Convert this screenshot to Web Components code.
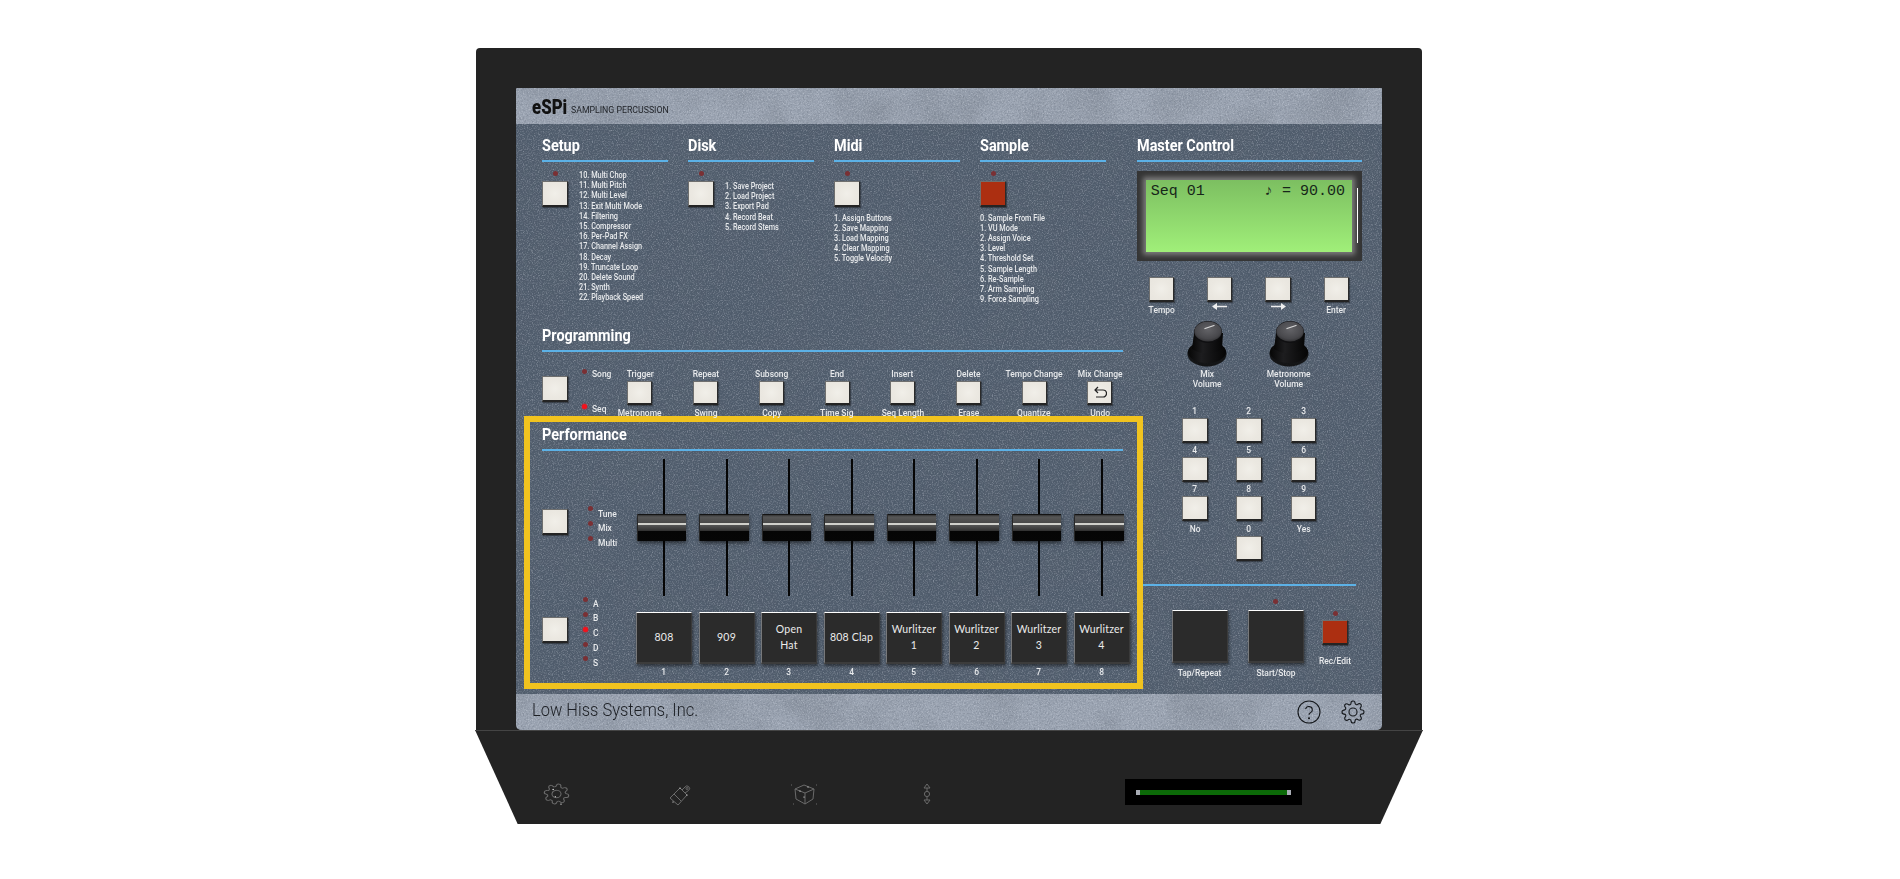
<!DOCTYPE html>
<html>

<head>
    <meta charset="utf8" />
    <style>
        body {
            margin: 0;
            background: #fff;
            font-family: Roboto, "Liberation Sans", sans-serif;
            overflow: hidden;
        }
    </style>
</head>

<body>
    <sp-case>
        <sp-panel>
            <sp-column slot="left">
                <sp-top>
                    <sp-section title="Setup">
                        <sp-row>
                            <sp-ledbutton></sp-ledbutton>
                            <sp-list style="--gap:11px">
                                <div>10. Multi Chop</div><div>11. Multi Pitch</div><div>12. Multi Level</div>
                                <div>13. Exit Multi Mode</div><div>14. Filtering</div><div>15. Compressor</div>
                                <div>16. Per-Pad FX</div><div>17. Channel Assign</div><div>18. Decay</div>
                                <div>19. Truncate Loop</div><div>20. Delete Sound</div><div>21. Synth</div>
                                <div>22. Playback Speed</div>
                            </sp-list>
                        </sp-row>
                    </sp-section>
                    <sp-section title="Disk">
                        <sp-row>
                            <sp-ledbutton></sp-ledbutton>
                            <sp-list style="--gap:11px;--top:19px">
                                <div>1. Save Project</div><div>2. Load Project</div><div>3. Export Pad</div>
                                <div>4. Record Beat</div><div>5. Record Stems</div>
                            </sp-list>
                        </sp-row>
                    </sp-section>
                    <sp-section title="Midi">
                        <sp-ledbutton></sp-ledbutton>
                        <sp-list style="--top:6px">
                            <div>1. Assign Buttons</div><div>2. Save Mapping</div><div>3. Load Mapping</div>
                            <div>4. Clear Mapping</div><div>5. Toggle Velocity</div>
                        </sp-list>
                    </sp-section>
                    <sp-section title="Sample">
                        <sp-ledbutton red></sp-ledbutton>
                        <sp-list style="--top:6px">
                            <div>0. Sample From File</div><div>1. VU Mode</div><div>2. Assign Voice</div>
                            <div>3. Level</div><div>4. Threshold Set</div><div>5. Sample Length</div>
                            <div>6. Re-Sample</div><div>7. Arm Sampling</div><div>9. Force Sampling</div>
                        </sp-list>
                    </sp-section>
                </sp-top>
                <sp-programming>
                    <sp-cell top="Trigger" bottom="Metronome"></sp-cell>
                    <sp-cell top="Repeat" bottom="Swing"></sp-cell>
                    <sp-cell top="Subsong" bottom="Copy"></sp-cell>
                    <sp-cell top="End" bottom="Time Sig"></sp-cell>
                    <sp-cell top="Insert" bottom="Seq Length"></sp-cell>
                    <sp-cell top="Delete" bottom="Erase"></sp-cell>
                    <sp-cell top="Tempo Change" bottom="Quantize"></sp-cell>
                    <sp-cell top="Mix Change" bottom="Undo" undo></sp-cell>
                </sp-programming>
                <sp-performance>
                    <sp-fader></sp-fader><sp-fader></sp-fader><sp-fader></sp-fader><sp-fader></sp-fader>
                    <sp-fader></sp-fader><sp-fader></sp-fader><sp-fader></sp-fader><sp-fader></sp-fader>
                    <sp-pad slot="pads" num="1">808</sp-pad>
                    <sp-pad slot="pads" num="2">909</sp-pad>
                    <sp-pad slot="pads" num="3">Open<br>Hat</sp-pad>
                    <sp-pad slot="pads" num="4">808 Clap</sp-pad>
                    <sp-pad slot="pads" num="5">Wurlitzer<br>1</sp-pad>
                    <sp-pad slot="pads" num="6">Wurlitzer<br>2</sp-pad>
                    <sp-pad slot="pads" num="7">Wurlitzer<br>3</sp-pad>
                    <sp-pad slot="pads" num="8">Wurlitzer<br>4</sp-pad>
                </sp-performance>
            </sp-column>
            <sp-master slot="right"></sp-master>
        </sp-panel>
    </sp-case>
    <script>
        const GEAR = 'M19.4 15a1.65 1.65 0 0 0 .33 1.82l.06.06a2 2 0 0 1 0 2.83 2 2 0 0 1-2.83 0l-.06-.06a1.65 1.65 0 0 0-1.82-.33 1.65 1.65 0 0 0-1 1.51V21a2 2 0 0 1-2 2 2 2 0 0 1-2-2v-.09A1.65 1.65 0 0 0 9 19.4a1.65 1.65 0 0 0-1.82.33l-.06.06a2 2 0 0 1-2.83 0 2 2 0 0 1 0-2.83l.06-.06a1.65 1.65 0 0 0 .33-1.82 1.65 1.65 0 0 0-1.51-1H3a2 2 0 0 1-2-2 2 2 0 0 1 2-2h.09A1.65 1.65 0 0 0 4.6 9a1.65 1.65 0 0 0-.33-1.82l-.06-.06a2 2 0 0 1 0-2.83 2 2 0 0 1 2.83 0l.06.06a1.65 1.65 0 0 0 1.82.33H9a1.65 1.65 0 0 0 1-1.51V3a2 2 0 0 1 2-2 2 2 0 0 1 2 2v.09a1.65 1.65 0 0 0 1 1.51 1.65 1.65 0 0 0 1.82-.33l.06-.06a2 2 0 0 1 2.83 0 2 2 0 0 1 0 2.83l-.06.06a1.65 1.65 0 0 0-.33 1.82V9a1.65 1.65 0 0 0 1.51 1H21a2 2 0 0 1 2 2 2 2 0 0 1-2 2h-.09a1.65 1.65 0 0 0-1.51 1z'

        // small printed label, squeezed because the panel font is a condensed one
        const LABEL = `.lb{font-size:9.5px;line-height:10px;color:#e8eaec;white-space:nowrap;transform:scaleX(.89);font-weight:500}`

        // every element is only markup + styles in an open shadow root
        function make(name, css, html) {
            customElements.define(name, class extends HTMLElement {
                connectedCallback() {
                    if (this.shadowRoot) return
                    const attrs = {}
                    for (const a of this.attributes) attrs[a.name] = a.value
                    const shadow = this.attachShadow({ mode: 'open' })
                    shadow.innerHTML = `<style>${LABEL}${css}</style>` + (typeof html === 'function' ? html(attrs, this) : html)
                }
            })
        }

        make('sp-led', `
            :host{display:block;width:5px;height:5px;border-radius:50%;background:#7a3034;flex:none}
            :host([on]){background:#f3121c;box-shadow:0 0 2px #f3121c}
        `, '')

        make('sp-button', `
            :host{display:block;box-sizing:border-box;flex:none;width:var(--w,26px);height:var(--h,26px);
                background:radial-gradient(circle at 50% 50%,#f1efe9 0,#ebe8e1 55%,#e8e5de 100%);
                border:1.5px solid #6f6f6e;border-right-color:#2b2b2b;border-bottom:2px solid #242424;
                box-shadow:1px 1px 1px rgba(0,0,0,.35);display:flex;align-items:center;justify-content:center}
            :host([red]){background:#ac2f11}
            svg{width:14px;height:13px;fill:none;stroke:#222;stroke-width:1.2}
        `, a => 'undo' in a ? `<svg viewBox="0 0 14 13"><path d="M5 1 2 4l3 3M2 4h8a3.5 3.5 0 0 1 0 7H3"/></svg>` : '')

        make('sp-ledbutton', `
            :host{display:flex;flex-direction:column;align-items:center;width:26px;padding-top:8.5px;flex:none}
            sp-button{margin-top:5px}
        `, a => `<sp-led></sp-led><sp-button ${'red' in a ? 'red' : ''}></sp-button>`)

        make('sp-head', `
            :host{display:block;box-sizing:border-box;height:27px;border-bottom:2.6px solid #5cb1e6;flex:none}
            div{font-size:16.5px;line-height:22px;font-weight:700;color:#fff;transform:scaleX(.875);transform-origin:0 50%;white-space:nowrap}
        `, `<div><slot></slot></div>`)

        make('sp-section', `
            :host{display:block;width:126px;flex:none}
        `, a => `<sp-head>${a.title}</sp-head><slot></slot>`)

        make('sp-row', `:host{display:flex}`, `<slot></slot>`)

        make('sp-list', `
            :host{display:block;font-size:9.5px;line-height:10.2px;font-weight:500;color:#e8eaec;white-space:nowrap;
                margin-left:var(--gap,0);margin-top:var(--top,8px);transform:scaleX(.77);transform-origin:0 0}
        `, `<slot></slot>`)

        make('sp-top', `:host{display:flex;gap:20px;height:190px;margin-left:26px}`, `<slot></slot>`)

        make('sp-mode', `
            :host{display:flex;gap:5px;height:10px;align-items:flex-start}
            sp-led{margin-top:var(--mt,0)}
            .lb{transform-origin:0 50%}
        `, a => `<sp-led ${'on' in a ? 'on' : ''}></sp-led><div class="lb">${a.text}</div>`)

        make('sp-cell', `
            :host{display:flex;flex-direction:column;align-items:center;width:65.7px;flex:none}
            sp-button{--w:25px;--h:24px;margin:2px 0 3.3px}
        `, a => `<div class="lb">${a.top}</div><sp-button ${'undo' in a ? 'undo' : ''}></sp-button><div class="lb">${a.bottom}</div>`)

        make('sp-programming', `
            :host{display:block;height:91px;margin-left:26px;width:581px}
            .row{display:flex;margin-top:16.7px;width:640px}
            sp-button{margin-top:7px}
            .modes{width:39.15px;flex:none;box-sizing:border-box;padding-left:13.5px;display:flex;flex-direction:column;gap:25.3px;--mt:.5px}
        `, `<sp-head>Programming</sp-head>
            <div class="row">
                <sp-button></sp-button>
                <div class="modes"><sp-mode text="Song"></sp-mode><sp-mode text="Seq" on></sp-mode></div>
                <slot></slot>
            </div>`)

        make('sp-fader', `
            :host{display:flex;justify-content:center;width:62.5px;height:137px;position:relative}
            .track{width:2.2px;height:100%;background:#050505;margin-left:.6px}
            .thumb{position:absolute;left:5.2px;top:55px;width:48.5px;height:27px;box-sizing:border-box;
                border-top:1.5px solid #141414;
                background:linear-gradient(#333 0,#565656 2px,#474747 8px,#cfcfca 8.4px,#cfcfca 10px,#525252 10.4px,#303030 16px,#050505 16.4px,#060606 100%);
                box-shadow:0 2px 4px rgba(0,0,0,.55),-1px 0 0 #333}
        `, `<div class="track"></div><div class="thumb"></div>`)

        make('sp-pad', `
            :host{display:flex;flex-direction:column;align-items:center;width:62.5px}
            .pad{box-sizing:border-box;width:var(--w,56px);height:var(--h,52px);background:#2b2b2b;
                border-top:1.2px solid #fff;border-left:1.5px solid #77787a;border-right:1.5px solid #3a3a3a;border-bottom:2px solid #3c3c3c;
                box-shadow:1px 2px 3px rgba(0,0,0,.5);
                display:flex;align-items:center;justify-content:center;text-align:center;
                font-family:Lato,sans-serif;font-weight:400;font-size:10.5px;line-height:16.5px;color:#ececec;letter-spacing:.2px}
            .lb{margin-top:3.4px}
        `, a => `<div class="pad"><div><slot></slot></div></div><div class="lb">${a.num || ''}</div>`)

        make('sp-performance', `
            :host{display:block;box-sizing:border-box;width:619px;height:273px;margin-left:8px;flex:none;
                border:6px solid #f1c31f;padding:1.5px 0 0 12px}
            sp-head{width:581px}
            .grid{display:grid;grid-template-columns:90.75px 500px;grid-template-rows:137px auto;row-gap:15.7px;margin-top:8.4px}
            .faders,.pads{display:flex}
            .left1{display:flex}
            .left1 sp-button{margin-top:50px}
            .m1{margin:49.7px 0 0 19.5px;display:flex;flex-direction:column;gap:4.8px;--mt:-2.2px}
            .left2{display:flex;margin-top:5px}
            .m2{margin:-18px 0 0 14.5px;display:flex;flex-direction:column;gap:4.85px;--mt:-1.5px}
        `, `<sp-head>Performance</sp-head>
            <div class="grid">
                <div class="left1">
                    <sp-button></sp-button>
                    <div class="m1"><sp-mode text="Tune"></sp-mode><sp-mode text="Mix"></sp-mode><sp-mode text="Multi"></sp-mode></div>
                </div>
                <div class="faders"><slot></slot></div>
                <div class="left2">
                    <sp-button></sp-button>
                    <div class="m2">
                        <sp-mode text="A"></sp-mode><sp-mode text="B"></sp-mode><sp-mode text="C" on></sp-mode><sp-mode text="D"></sp-mode><sp-mode text="S"></sp-mode>
                    </div>
                </div>
                <div class="pads"><slot name="pads"></slot></div>
            </div>`)

        make('sp-column', `:host{display:flex;flex-direction:column;width:621px;flex:none;padding-top:11px}`, `<slot></slot>`)

        make('sp-lcd', `
            :host{display:block;box-sizing:border-box;width:225px;height:90px;margin-top:9px;padding:9px 10px 9px 8.7px;background:#353535;position:relative}
            .screen{box-sizing:border-box;height:72px;background:linear-gradient(#7cbf61,#a0ef79);box-shadow:0 0 5px 3px #7d7d7d;
                display:flex;justify-content:space-between;padding:3px 7px 0 5px;
                font-family:"Liberation Mono","DejaVu Sans Mono",monospace;font-size:15px;line-height:17px;color:#17261a}
            .glint{position:absolute;right:4px;top:17px;width:1px;height:55px;background:#fff}
        `, `<div class="screen"><span>Seq 01</span><span>♪ = 90.00</span></div><div class="glint"></div>`)

        make('sp-knob', `
            :host{display:flex;flex-direction:column;align-items:center;width:81.6px;flex:none}
            svg{width:40px;height:46px;display:block}
            .lb{margin-top:2.5px;text-align:center}
        `, a => `<svg viewBox="0 0 40 46">
                <defs>
                    <radialGradient id="k" cx=".5" cy=".4" r=".65"><stop offset="0" stop-color="#636367"/><stop offset=".7" stop-color="#48484c"/><stop offset="1" stop-color="#2c2c2e"/></radialGradient>
                    <linearGradient id="b" x1="0" x2="1"><stop offset="0" stop-color="#060606"/><stop offset=".35" stop-color="#1d1d1f"/><stop offset="1" stop-color="#050505"/></linearGradient>
                    <filter id="s"><feGaussianBlur stdDeviation=".7"/></filter>
                </defs>
                <ellipse cx="20" cy="33" rx="19.5" ry="12.5" fill="#0a0a0a" opacity=".9" filter="url(#s)"/>
                <ellipse cx="20" cy="31" rx="19" ry="11" fill="url(#b)"/>
                <path d="M7 12 5 28q15 9 30 0l1-16z" fill="url(#b)"/>
                <ellipse cx="21" cy="11" rx="14" ry="11" fill="#101012"/>
                <ellipse cx="21" cy="10.5" rx="13.6" ry="10" fill="url(#k)"/>
                <path d="M18 7.5 27 4.5" stroke="#d8d8d8" stroke-width="1.3" stroke-linecap="round"/>
            </svg><div class="lb">${a.top}<br>Volume</div>`)

        make('sp-key', `
            :host{display:flex;flex-direction:column;align-items:center;height:37px}
            sp-button{--w:25.4px;--h:25px;margin-top:2px}
        `, a => `<div class="lb">${a.text}</div>${'blank' in a ? '' : '<sp-button></sp-button>'}`)

        make('sp-navkey', `
            :host{display:flex;flex-direction:column;align-items:center;width:58.3px;height:44px;flex:none}
            sp-button{--w:25.4px;--h:25px}
            .lb{margin-top:3px}
            svg{width:15px;height:7px;margin-top:1.5px;fill:#eee;display:block}
        `, a => {
            const arrow = {
                left: '<path d="M0 3.5 5 0v2.7h10v1.6H5V7z"/>',
                right: '<path d="M15 3.5 10 0v2.7H0v1.6h10V7z"/>'
            }[a.arrow]
            return `<sp-button></sp-button>` + (arrow ? `<svg viewBox="0 0 15 7">${arrow}</svg>` : `<div class="lb">${a.text}</div>`)
        })

        make('sp-master', `
            :host{display:block;width:245px;flex:none;padding-top:11px}
            sp-head{width:225px}
            .nav{display:flex;margin:15.7px 0 0 -4.7px}
            .knobs{display:flex;margin-left:29.2px;margin-top:0}
            .keys{display:grid;grid-template-columns:repeat(3,54.2px);row-gap:2.3px;margin:16.7px 0 0 30.9px}
            .rule{height:2.6px;width:212.7px;margin:23px 0 0 6px;background:#5cb1e6}
            .transport{display:flex;margin:12.2px 0 0 34.7px}
            .col{display:flex;flex-direction:column;align-items:center}
            .col sp-pad{--h:53px}
            .tap,.start{width:56px}
            .tap{margin-top:11.1px;margin-right:20px}
            .start{margin-right:14px}
            .start sp-led{margin-bottom:6.1px}
            .rec{width:35px;margin-top:12px}
            .rec sp-button{--w:25.4px;--h:25.4px;margin:4px 0 10.8px}
            .start .lb,.tap .lb{margin-top:2px}
            sp-pad{width:56px}
        `, `<sp-head>Master Control</sp-head>
            <sp-lcd></sp-lcd>
            <div class="nav">
                <sp-navkey text="Tempo"></sp-navkey><sp-navkey arrow="left"></sp-navkey><sp-navkey arrow="right"></sp-navkey><sp-navkey text="Enter"></sp-navkey>
            </div>
            <div class="knobs"><sp-knob top="Mix"></sp-knob><sp-knob top="Metronome"></sp-knob></div>
            <div class="keys">
                <sp-key text="1"></sp-key><sp-key text="2"></sp-key><sp-key text="3"></sp-key>
                <sp-key text="4"></sp-key><sp-key text="5"></sp-key><sp-key text="6"></sp-key>
                <sp-key text="7"></sp-key><sp-key text="8"></sp-key><sp-key text="9"></sp-key>
                <sp-key text="No" blank></sp-key><sp-key text="0"></sp-key><sp-key text="Yes" blank></sp-key>
            </div>
            <div class="rule"></div>
            <div class="transport">
                <div class="col tap"><sp-pad></sp-pad><div class="lb">Tap/Repeat</div></div>
                <div class="col start"><sp-led></sp-led><sp-pad></sp-pad><div class="lb">Start/Stop</div></div>
                <div class="col rec"><sp-led></sp-led><sp-button red></sp-button><div class="lb">Rec/Edit</div></div>
            </div>`)

        make('sp-panel', `
            :host{display:flex;flex-direction:column;width:866px;height:642px;position:relative;border-radius:1px 1px 5px 5px;overflow:hidden;
                background:linear-gradient(#9ba4b2 36px,#4f5c6c 36px,#4f5c6c 606px,#9ba4b2 606px)}
            svg.tex{position:absolute;inset:0;width:100%;height:100%;pointer-events:none}
            header,footer{height:36px;flex:none;position:relative;display:flex;align-items:center;color:#1a1d22}
            header{padding-left:16px;gap:4px;align-items:flex-end;box-sizing:border-box;padding-bottom:6px}
            .logo{font-size:19.5px;line-height:20px;font-weight:900;color:#111;transform:scaleX(.86);transform-origin:0 100%;width:35px}
            .sub{font-size:9.5px;line-height:12px;font-weight:400;color:#23262b;transform:scaleX(.92);transform-origin:0 100%;white-space:nowrap;margin-bottom:2px}
            main{flex:1;display:flex;position:relative;min-height:0}
            footer{box-sizing:border-box;padding:0 17px 0 16px;justify-content:space-between}
            .co{font-size:18px;line-height:22px;margin-bottom:4px;font-weight:300;color:#1c1f24;transform:scaleX(.915);transform-origin:0 50%;white-space:nowrap}
            .ic{display:flex;gap:20px;align-items:center}
            .ic svg{display:block;width:24px;height:24px;fill:none;stroke:#15181c;stroke-width:1.1}
        `, `<svg class="tex" xmlns="http://www.w3.org/2000/svg">
                <filter id="fine"><feTurbulence type="fractalNoise" baseFrequency=".8" numOctaves="2" seed="4"/><feColorMatrix values="0 0 0 0 .9 0 0 0 0 .93 0 0 0 0 1 .5 .5 0 0 -.47"/></filter>
                <filter id="dark"><feTurbulence type="fractalNoise" baseFrequency=".55" numOctaves="2" seed="11"/><feColorMatrix values="0 0 0 0 .1 0 0 0 0 .12 0 0 0 0 .16 .5 .5 0 0 -.44"/></filter>
                <filter id="mott"><feTurbulence type="fractalNoise" baseFrequency=".02" numOctaves="4" seed="7"/><feColorMatrix values="0 0 0 0 .1 0 0 0 0 .12 0 0 0 0 .15 .4 .3 0 0 -.3"/></filter>
            </svg>
            <header><span class="logo">eSPi</span><span class="sub">SAMPLING PERCUSSION</span></header>
            <main><slot name="left"></slot><slot name="right"></slot></main>
            <footer><span class="co">Low Hiss Systems, Inc.</span>
                <span class="ic">
                    <svg viewBox="0 0 24 24"><circle cx="12" cy="12" r="11"/><path d="M8.6 9.2a3.4 3.4 0 0 1 6.7 1c0 2.3-3.3 2.6-3.3 4.6"/><circle cx="12" cy="18.2" r=".5" fill="#15181c"/></svg>
                    <svg viewBox="0 0 24 24"><circle cx="12" cy="12" r="4"/><path d="${GEAR}"/></svg>
                </span>
            </footer>`)

        make('sp-case', `
            :host{display:block;width:948px;margin:48px 0 0 475px}
            .upper{box-sizing:border-box;width:946px;height:682px;margin-left:1px;padding:40px 40px 0;background:#232323;border-radius:4px 4px 0 0}
            .lower{height:94px;background:#232323;border-top:1px solid #444;box-sizing:border-box;
                clip-path:polygon(0 0,100% 0,95.5% 100%,4.5% 100%);
                display:grid;grid-template-columns:repeat(4,123.3px) 177px;padding:0 0 0 20.3px;align-items:start}
            .lower svg{display:block;margin:52px auto 0;fill:none;stroke:#6a6a6a;stroke-width:1}
            .lower svg .d{fill:#fff;stroke:none}
            .meter{grid-column:5;margin:48px 0 0 137px;width:177px;height:26px;background:#000;box-sizing:border-box;padding:10.5px 11px 0;position:relative}
            .bar{height:5px;background:#0c6a08;border-left:4px solid #a8acb4;border-right:4px solid #a8acb4}
        `, `<div class="upper"><slot></slot></div>
            <div class="lower">
                <svg width="27" height="22" viewBox="0 0 24 24" preserveAspectRatio="none"><g transform="rotate(12 12 12)"><circle cx="12" cy="12" r="4"/><path d="${GEAR}"/></g><circle class="d" cx="9" cy="7" r=".6"/><circle class="d" cx="11" cy="15" r=".6"/><circle class="d" cx="16" cy="23" r=".6"/></svg>
                <svg width="24" height="24" viewBox="0 0 24 24"><path d="M2 15 12 5l7 7-9 10z"/><path d="M6 11l7 7M14 7l3-3a2.5 2.5 0 1 1 3.5 3.5L17 10"/><circle cx="19" cy="5.5" r="1"/><circle class="d" cx="12" cy="5" r=".6"/><circle class="d" cx="19" cy="12" r=".6"/><circle class="d" cx="5" cy="19" r=".6"/></svg>
                <svg width="28" height="22" viewBox="0 0 28 22"><path d="M14 2 5 6l1 10 9 5 8-5 1-10zM5 6l10 4 9-4M15 10v11"/><path d="M1 2h1M26 2h1M3 21h1M26 21h1" stroke-dasharray="1 1"/><circle class="d" cx="10" cy="8" r=".6"/><circle class="d" cx="18" cy="4" r=".6"/><circle class="d" cx="14" cy="14" r=".6"/></svg>
                <svg width="8" height="22" viewBox="0 0 8 22"><path d="M4 1 1 5h6zM4 21 1 17h6zM4 5v3M4 14v3"/><circle cx="4" cy="11" r="2.6"/></svg>
                <div class="meter"><div class="bar"></div></div>
            </div>`)

        // paper grain on the panel is drawn once, after the panel exists
        document.querySelectorAll('sp-panel').forEach(p => {
            const svg = p.shadowRoot.querySelector('svg.tex')
            svg.innerHTML += `<rect width="866" height="642" filter="url(#mott)"/><rect width="866" height="642" filter="url(#dark)"/><rect width="866" height="642" filter="url(#fine)"/>`
        })
    </script>
</body>

</html>
